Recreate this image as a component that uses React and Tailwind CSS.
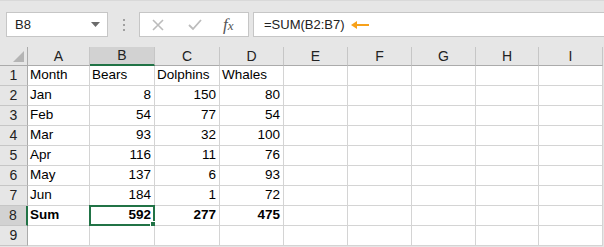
import React from 'react';

const cols = ['A', 'B', 'C', 'D', 'E', 'F', 'G', 'H', 'I'];

const rows = [
  ['Month', 'Bears', 'Dolphins', 'Whales'],
  ['Jan', 8, 150, 80],
  ['Feb', 54, 77, 54],
  ['Mar', 93, 32, 100],
  ['Apr', 116, 11, 76],
  ['May', 137, 6, 93],
  ['Jun', 184, 1, 72],
  ['Sum', 592, 277, 475],
  [],
];

function Toolbar() {
  return (
    <div className="h-[47px] flex items-start pt-[11px] pl-[6px] bg-[#e6e6e6] border-t border-[#d9d9d9]">
      <div className="w-[102px] h-[25px] bg-white border border-[#c6c6c6] flex items-center justify-between pl-[8px] pr-[7px]">
        <span className="text-[13px] text-[#222]">B8</span>
        <svg width="9" height="5" viewBox="0 0 9 5">
          <path d="M0 0 L9 0 L4.5 5 Z" fill="#6b6b6b" />
        </svg>
      </div>
      <div className="w-[31px] h-[25px] flex flex-col items-center justify-center gap-[3px]">
        <span className="w-[2px] h-[2px] bg-[#a0a0a0]" />
        <span className="w-[2px] h-[2px] bg-[#a0a0a0]" />
        <span className="w-[2px] h-[2px] bg-[#a0a0a0]" />
      </div>
      <div className="w-[110px] h-[25px] bg-white border border-[#c6c6c6] flex items-center">
        <svg width="12" height="12" viewBox="0 0 12 12" className="ml-[12px]">
          <path d="M1 1 L11 11 M11 1 L1 11" stroke="#bcbcbc" strokeWidth="1.6" />
        </svg>
        <svg width="14" height="12" viewBox="0 0 14 12" className="ml-[24px]">
          <path d="M1 6 L5 10 L13 1" stroke="#bcbcbc" strokeWidth="1.8" fill="none" />
        </svg>
        <span
          className="ml-[21px] text-[17px] leading-none italic text-[#555]"
          style={{ fontFamily: '"Liberation Serif", serif' }}
        >
          f<span className="text-[13px]">x</span>
        </span>
      </div>
      <div className="ml-[4px] flex-1 h-[25px] bg-white border border-[#c6c6c6] border-r-0 flex items-center pl-[10px]">
        <span className="text-[13px] text-[#222]">=SUM(B2:B7)</span>
        <svg width="19" height="8" viewBox="0 0 19 8" className="ml-[6px]">
          <path d="M18 4 L3 4" stroke="#f7a11a" strokeWidth="2" />
          <path d="M0 4 L6 0 L6 8 Z" fill="#f7a11a" />
        </svg>
      </div>
    </div>
  );
}

function Grid() {
  return (
    <div className="grid grid-cols-[28px_62px_65px_65px_64px_64px_64px_64px_63px_64px] grid-rows-[19px_repeat(9,20px)]">
      <div className="bg-[#e6e6e6] border-r border-b border-[#ababab] relative">
        <svg width="11" height="11" viewBox="0 0 11 11" className="absolute right-[3px] bottom-[3px]">
          <path d="M11 0 L11 11 L0 11 Z" fill="#b4b4b4" />
        </svg>
      </div>
      {cols.map((c) => (
        <div
          key={c}
          className={
            c === 'B'
              ? 'bg-[#d2d2d2] border-r border-[#c6c6c6] border-b-2 border-b-[#217346] flex items-center justify-center text-[14px] text-[#222]'
              : 'bg-[#e6e6e6] border-r border-[#c6c6c6] border-b border-b-[#ababab] flex items-center justify-center text-[14px] text-[#222]'
          }
        >
          {c}
        </div>
      ))}
      {rows.map((r, i) => (
        <React.Fragment key={i}>
          <div
            className={
              i === 7
                ? 'bg-[#d2d2d2] border-r-2 border-r-[#217346] border-b border-[#c6c6c6] flex items-center justify-center text-[14px] text-[#222]'
                : 'bg-[#e6e6e6] border-r border-r-[#ababab] border-b border-[#c6c6c6] flex items-center justify-center text-[14px] text-[#222]'
            }
          >
            {i + 1}
          </div>
          {cols.map((c, j) => {
            const v = r[j];
            const isNum = typeof v === 'number';
            const sel = i === 7 && j === 1;
            return (
              <div
                key={c}
                className={
                  'relative border-r border-b border-[#d4d4d4] bg-white flex items-center text-[13.5px] text-black ' +
                  (isNum ? 'justify-end pr-[3px] ' : 'pl-[2px] ') +
                  (i === 7 ? 'font-bold' : '')
                }
              >
                {v}
                {sel && (
                  <>
                    <div className="absolute -left-[1px] -top-[1px] -right-[1px] -bottom-[1px] border-2 border-[#217346]" />
                    <div className="absolute -right-[3px] -bottom-[3px] w-[5px] h-[5px] bg-[#217346] border border-white box-content" />
                  </>
                )}
              </div>
            );
          })}
        </React.Fragment>
      ))}
    </div>
  );
}

export default function App() {
  return (
    <div
      className="w-[604px] h-[247px] overflow-hidden bg-[#e6e6e6]"
      style={{ fontFamily: '"Liberation Sans", Arial, sans-serif' }}
    >
      <Toolbar />
      <Grid />
    </div>
  );
}
